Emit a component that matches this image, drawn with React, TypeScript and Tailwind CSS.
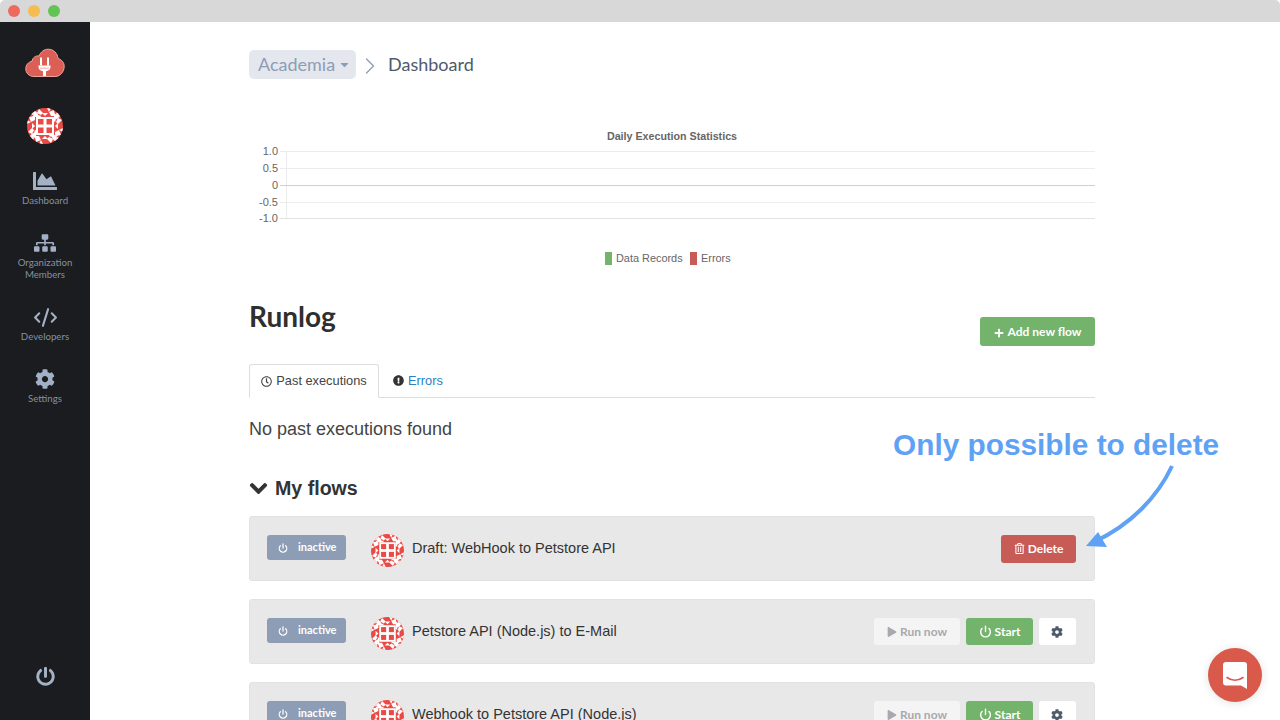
import React from "react";
import { FaChartArea, FaSitemap, FaCog, FaPlus, FaRegClock, FaExclamationCircle, FaChevronDown, FaRegTrashAlt, FaPlay, FaCaretDown, FaPowerOff } from "react-icons/fa";
import { Power, ChevronRight, CodeXml } from "lucide-react";

function Identicon({ size }: { size: number }) {
  const rots = [0, 90, 180, 270];
  return (
    <svg width={size} height={size} viewBox="0 0 36 36" className="shrink-0 block">
      <defs>
        <clipPath id={`c${size}`}><circle cx="18" cy="18" r="18" /></clipPath>
      </defs>
      <g clipPath={`url(#c${size})`}>
        <rect width="36" height="36" fill="#ea4a45" />
        {rots.map((r) => (
          <g key={r} transform={`rotate(${r} 18 18)`} fill="#ffffff">
            <polygon points="5,9 9,4 13,9 11,9 13,7 14,9" />
            <polygon points="3,3 8,3 5,7" />
            <polygon points="12,1 16,5 14,7 10,5" />
            <polygon points="20,0 24,0 22,4" />
            <polygon points="22,4 27,2 28,8 24,8" />
            <polygon points="15,5 21,5 18,8" />
            <polygon points="29,5 33,8 30,11" />
          </g>
        ))}
        <rect x="9" y="9" width="18" height="18" fill="#ffffff" />
        {[11, 19.5].map((x) =>
          [11, 19.5].map((y) => (
            <rect key={`${x}-${y}`} x={x} y={y} width="5.500" height="5.500" fill="#ea4a45" />
          ))
        )}
      </g>
    </svg>
  );
}

function CloudLogo() {
  return (
    <svg width="40" height="30" viewBox="0 0 40 30" className="block">
      <path d="M9 28.500C4 28.500.8 25 .8 20.800c0-3.800 2.600-6.800 6.200-7.500C7.600 9.600 10.600 7.400 14 8c1.600-4 5-6.800 9.200-6.800 5.400 0 9.400 4 9.800 9.400 3.600.8 6.200 3.900 6.200 7.800 0 5.200-4 10.100-9 10.100z" fill="#dc5f56" stroke="#f0a49e" strokeWidth="1" />
      <rect x="15" y="9.500" width="2" height="8" fill="#ffffff" />
      <rect x="22" y="9.500" width="2" height="8" fill="#ffffff" />
      <path d="M13.500 17.500h12v1.500c0 2.600-2.200 4-4.500 4.300V28h-3v-4.700c-2.300-.3-4.500-1.700-4.500-4.300z" fill="#ffffff" />
      <rect x="15" y="19.500" width="9" height="1.600" fill="#f4c5c1" />
    </svg>
  );
}

function NavItem({ icon, label, h }: { icon: React.ReactNode; label: React.ReactNode; h: string }) {
  return (
    <div className={`flex flex-col items-center text-[9.700px] leading-[12px] text-[#8691a1] text-center ${h}`}>
      <div className="h-[24px] flex items-center justify-center text-[#a3b1c6]">{icon}</div>
      <div className="mt-[1px]">{label}</div>
    </div>
  );
}

function Flow({ name, draft }: { name: string; draft?: boolean }) {
  return (
    <div className="h-[65px] mb-[18px] bg-[#e8e8e8] border border-[#e2e2e2] rounded-[3px] flex items-center pl-[17px] pr-[18px]">
      <div className="w-[79px] h-[25px] bg-[#8d9db6] rounded-[3px] flex items-center text-white text-[11px] font-bold -mt-[2px]">
        <Power className="ml-[11px]" size={10} strokeWidth={3} />
        <span className="ml-[10px]">inactive</span>
      </div>
      <div className="ml-[25px] mt-[3px]"><Identicon size={33} /></div>
      <div className="ml-[8px] text-[14.500px] text-[#333] font-['Liberation_Sans',sans-serif]">{name}</div>
      {draft ? (
        <div className="ml-auto w-[75px] h-[28px] bg-[#c75c57] rounded-[3px] flex items-center justify-center text-white text-[12px] font-bold gap-[3px]">
          <FaRegTrashAlt className="text-[11px]" />Delete
        </div>
      ) : (
        <div className="ml-auto flex items-center gap-[6px] text-[12px] font-bold">
          <div className="w-[86px] h-[27px] bg-[#f4f4f4] rounded-[3px] flex items-center justify-center text-[#a8a9ae] gap-[3px]">
            <FaPlay className="text-[10px]" />Run now
          </div>
          <div className="w-[67px] h-[27px] bg-[#74b36b] rounded-[3px] flex items-center justify-center text-white gap-[3px]">
            <Power size={13} strokeWidth={2.600} />Start
          </div>
          <div className="w-[37px] h-[27px] bg-white rounded-[3px] flex items-center justify-center text-[#4f5a6b] pr-[1px]">
            <FaCog className="text-[12px]" />
          </div>
        </div>
      )}
    </div>
  );
}

function Chart() {
  const ys = [0, 17, 34, 51, 67];
  const labels = ["1.0", "0.5", "0", "-0.5", "-1.0"];
  return (
    <svg width="846" height="146" viewBox="0 0 846 146" className="block font-['Liberation_Sans',sans-serif]">
      <text x="423" y="15" textAnchor="middle" fontSize="10.700" fontWeight="700" fill="#666">Daily Execution Statistics</text>
      <g transform="translate(0,26.500)">
        <line x1="37.500" x2="37.500" y1="0" y2="67" stroke="#ececec" />
        {ys.map((y, i) => (
          <g key={y}>
            <line x1="31" x2="846" y1={y} y2={y} stroke={i === 2 ? "#cfcfcf" : i === 4 ? "#e2e2e2" : "#ececec"} />
            <text x="29" y={y + 3} textAnchor="end" fontSize="11" fill="#666">{labels[i]}</text>
          </g>
        ))}
      </g>
      <rect x="356" y="127" width="7" height="13" fill="#74b36b" />
      <text x="367" y="137" fontSize="10.900" fill="#666">Data Records</text>
      <rect x="441" y="127" width="7" height="13" fill="#c75c57" />
      <text x="452" y="137" fontSize="10.900" fill="#666">Errors</text>
    </svg>
  );
}

export default function App() {
  return (
    <div className="w-[1280px] h-[720px] overflow-hidden relative flex flex-col bg-white font-['Lato',sans-serif]">
      <div className="h-[22px] shrink-0 bg-[#d8d8d8] rounded-t-[5px] flex items-center pl-[8px] gap-[8px]">
        <span className="w-[12px] h-[12px] rounded-full bg-[#ee6a5f]" />
        <span className="w-[12px] h-[12px] rounded-full bg-[#f5bd4f]" />
        <span className="w-[12px] h-[12px] rounded-full bg-[#61c454]" />
      </div>
      <div className="flex flex-1 min-h-0">
        <aside className="w-[90px] shrink-0 bg-[#1a1c1f] flex flex-col items-center">
          <div className="mt-[26px]"><CloudLogo /></div>
          <div className="mt-[30px]"><Identicon size={36} /></div>
          <div className="mt-[25px] flex flex-col items-center">
            <NavItem h="h-[62px]" icon={<FaChartArea className="text-[24px]" />} label="Dashboard" />
            <NavItem h="h-[74px]" icon={<FaSitemap className="text-[22px]" />} label={<>Organization<br />Members</>} />
            <NavItem h="h-[62px]" icon={<CodeXml size={25} strokeWidth={2} />} label="Developers" />
            <NavItem h="h-[50px]" icon={<FaCog className="text-[20px]" />} label="Settings" />
          </div>
          <div className="mt-auto mb-[34px] text-[#a3b1c6]"><FaPowerOff className="text-[19px]" /></div>
        </aside>
        <main className="w-[846px] ml-[159px]">
          <div className="mt-[28px] flex items-center h-[29px]">
            <div className="w-[107px] h-[29px] bg-[#e4e8ee] rounded-[5px] flex items-center pl-[9px] text-[18px] text-[#8d9db6]">
              Academia<FaCaretDown className="ml-[3px] text-[13px]" />
            </div>
            <ChevronRight className="mt-[2px] text-[#8d9db6]" size={28} strokeWidth={1.100} />
            <div className="ml-[4px] text-[18px] text-[#4f5a6b]">Dashboard</div>
          </div>
          <div className="mt-[46px]"><Chart /></div>
          <div className="mt-[26px] flex items-start justify-between h-[49px]">
            <h1 className="text-[28px] leading-[34px] font-bold text-[#2f2f2f] mt-[2px]">Runlog</h1>
            <div className="mt-[20px] w-[115px] h-[29px] bg-[#74b36b] rounded-[3px] flex items-center justify-center gap-[4px] text-white text-[12px] font-bold">
              <FaPlus className="text-[10px] mt-[2px]" />Add new flow
            </div>
          </div>
          <div className="flex h-[34px] border-b border-[#ddd] font-['Liberation_Sans',sans-serif] text-[12.800px] mt-[18px]">
            <div className="w-[130px] h-[34px] bg-white border border-[#ddd] border-b-white rounded-t-[3px] flex items-center justify-center gap-[4px] text-[#444]">
              <FaRegClock className="text-[11px]" />Past executions
            </div>
            <div className="ml-[14px] flex items-center gap-[4px] text-[#2b7fc3]">
              <FaExclamationCircle className="text-[11px] text-[#333]" />Errors
            </div>
          </div>
          <div className="mt-[19px] text-[18px] leading-[24px] text-[#444] font-['Liberation_Sans',sans-serif]">No past executions found</div>
          <div className="mt-[33px] flex items-center gap-[7px] text-[19.600px] leading-[28px] font-bold text-[#333] font-['Liberation_Sans',sans-serif]">
            <FaChevronDown className="text-[19px] stroke-[30px]" />My flows
          </div>
          <div className="mt-[14px]">
            <Flow draft name="Draft: WebHook to Petstore API" />
            <Flow name="Petstore API (Node.js) to E-Mail" />
            <Flow name="Webhook to Petstore API (Node.js)" />
          </div>
        </main>
      </div>

      <div className="absolute left-[893px] top-[427px] text-[29.800px] leading-[36px] font-bold text-[#5fa2f5] font-['Liberation_Sans',sans-serif] whitespace-nowrap">Only possible to delete</div>
      <svg className="absolute left-[1080px] top-[460px]" width="100" height="95" viewBox="0 0 100 95">
        <path d="M92 6C78 36 52 64 14 82" fill="none" stroke="#5fa2f5" strokeWidth="4" />
        <polygon points="6,86 18,72 27,87" fill="#5fa2f5" />
      </svg>
      <div className="absolute left-[1208px] top-[648px] w-[54px] h-[54px] rounded-full bg-[#d9594a] shadow-[0_1px_10px_rgba(0,0,0,0.12)] flex items-center justify-center">
        <svg width="24" height="27" viewBox="0 0 24 27">
          <path d="M3 0h18a3 3 0 0 1 3 3v24l-6-3.500H3a3 3 0 0 1-3-3V3a3 3 0 0 1 3-3z" fill="#fff" />
          <path d="M4 15.500c5 3.500 11 3.500 16 0" fill="none" stroke="#d9594a" strokeWidth="1.600" strokeLinecap="round" />
        </svg>
      </div>
    </div>
  );
}
